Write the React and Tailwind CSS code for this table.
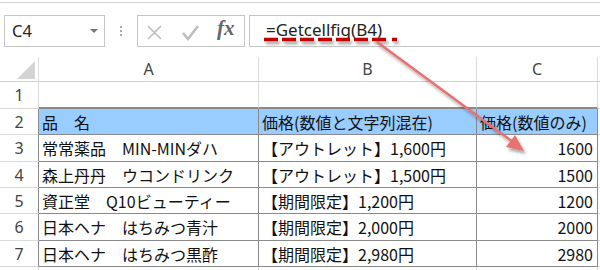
import React from "react";

const rows = [
  { n: 1, h: 27, a: "", b: "", c: "" },
  { n: 2, h: 26, a: "品　名", b: "価格(数値と文字列混在)", c: "価格(数値のみ)", head: true },
  { n: 3, h: 27, a: "常常薬品　MIN-MINダハ", b: "【アウトレット】1,600円", c: "1600" },
  { n: 4, h: 26, a: "森上丹丹　ウコンドリンク", b: "【アウトレット】1,500円", c: "1500" },
  { n: 5, h: 26, a: "資正堂　Q10ビューティー", b: "【期間限定】1,200円", c: "1200" },
  { n: 6, h: 27, a: "日本ヘナ　はちみつ青汁", b: "【期間限定】2,000円", c: "2000" },
  { n: 7, h: 26, a: "日本ヘナ　はちみつ黒酢", b: "【期間限定】2,980円", c: "2980" },
  { n: 8, h: 10, a: "", b: "", c: "" },
];

const Row = ({ row }) => {
  const inTable = row.n >= 2 && row.n <= 7;
  const cellBorder = inTable ? "border-[#8a8a8a]" : "border-[#dadada]";
  const bottom = row.n === 1 ? "border-b-2 border-b-[#8a8a8a]" : "border-b";
  const bg = row.head ? "bg-[#99ccff]" : "";
  return (
    <div className="flex shrink-0" style={{ height: row.h }}>
      <div
        className={`w-[39px] shrink-0 flex items-center justify-center border-b border-b-[#dadada] border-r ${
          inTable ? "border-r-[#8a8a8a]" : "border-r-[#dadada]"
        } text-[16px] text-[#444] font-['Noto_Sans',sans-serif]`}
      >
        {row.n === 8 ? "" : row.n}
      </div>
      <div className={`w-[220px] shrink-0 flex items-center pl-[3px] border-r ${bottom} ${cellBorder} ${bg} whitespace-nowrap`}>
        {row.a}
      </div>
      <div className={`w-[218px] shrink-0 flex items-center pl-[3px] border-r ${bottom} ${cellBorder} ${bg} whitespace-nowrap`}>
        {row.b}
      </div>
      <div
        className={`w-[121px] shrink-0 flex items-center border-r ${bottom} ${cellBorder} ${bg} whitespace-nowrap ${
          row.head ? "pl-[3px]" : "justify-end pr-[4px]"
        }`}
      >
        {row.c}
      </div>
      <div className="flex-1 border-b border-b-[#dadada]" />
    </div>
  );
};

export default function App() {
  return (
    <div className="relative w-[600px] h-[270px] overflow-hidden bg-white text-[#111] font-['Noto_Sans_CJK_JP',sans-serif] text-[16px] leading-none">
      {/* top strip */}
      <div className="h-[13px]">
        <div className="mt-[2px] h-px bg-[#d6d6d6]" />
      </div>

      {/* formula bar */}
      <div className="flex h-[32px]">
        <div className="ml-[4px] w-[101px] border border-[#c6c6c6] flex items-center justify-between pl-[7px] pr-[6px]">
          <span className="text-[16.5px] text-[#222] font-['Noto_Sans',sans-serif]">C4</span>
          <span className="w-0 h-0 border-l-[4px] border-r-[4px] border-t-[4px] border-l-transparent border-r-transparent border-t-[#777]" />
        </div>
        <div className="w-[32px] flex flex-col items-center justify-center gap-[2px]">
          <span className="w-[2px] h-[2px] bg-[#aaa]" />
          <span className="w-[2px] h-[2px] bg-[#aaa]" />
          <span className="w-[2px] h-[2px] bg-[#aaa]" />
        </div>
        <div className="w-[108px] border border-[#c6c6c6] flex items-center">
          <svg width="106" height="30" viewBox="0 0 106 30">
            <path d="M10 10 L23 23 M23 10 L10 23" stroke="#bdbdbd" strokeWidth="1.6" fill="none" />
            <path d="M45 17 L50 23 L60 10" stroke="#bdbdbd" strokeWidth="2.6" fill="none" />
          </svg>
          <span className="absolute left-[217px] top-[18px] text-[21px] italic font-semibold text-[#666] font-['Liberation_Serif',serif]">
            fx
          </span>
        </div>
        <div className="ml-[4px] flex-1 border-y border-l border-[#c6c6c6] flex items-center pl-[16px] pb-[4px]">
          <span className="text-[17px] text-[#222] font-['Noto_Sans',sans-serif]">=Getcellfig(B4)</span>
        </div>
      </div>

      <div className="h-[10px]" />

      {/* column headers */}
      <div className="flex h-[25px] border-b border-[#d0d0d0] text-[16px] text-[#444] font-['Noto_Sans',sans-serif]">
        <div className="w-[39px] border-r border-[#dadada] relative">
          <svg className="absolute left-[16px] top-[3px]" width="20" height="20" viewBox="0 0 20 20">
            <polygon points="1,19 19,1 19,19" fill="#d4d4d4" />
          </svg>
        </div>
        <div className="w-[220px] border-r border-[#dadada] flex items-center justify-center">A</div>
        <div className="w-[218px] border-r border-[#dadada] flex items-center justify-center">B</div>
        <div className="w-[121px] border-r border-[#dadada] flex items-center justify-center">C</div>
        <div className="flex-1" />
      </div>

      {/* grid rows */}
      {rows.map((r) => (
        <Row key={r.n} row={r} />
      ))}

      {/* annotation: dashed underline + arrow */}
      <svg className="absolute inset-0 pointer-events-none" width="600" height="270" viewBox="0 0 600 270">
        <defs>
          <filter id="sh" filterUnits="userSpaceOnUse" x="0" y="0" width="600" height="270">
            <feDropShadow dx="2" dy="3" stdDeviation="1.5" floodColor="#000" floodOpacity="0.35" />
          </filter>
        </defs>
        <g filter="url(#sh)">
          <line x1="264" y1="39.5" x2="388" y2="39.5" stroke="#c00000" strokeWidth="3.5" strokeDasharray="14 4" />
          <line x1="392" y1="39.5" x2="397" y2="39.5" stroke="#c00000" strokeWidth="3.5" />
        </g>
        <g filter="url(#sh)">
          <line x1="377" y1="42" x2="513" y2="142" stroke="#e87171" strokeWidth="2.5" />
          <polygon points="524,151 506,147 515,135" fill="#e87171" />
        </g>
      </svg>
    </div>
  );
}
